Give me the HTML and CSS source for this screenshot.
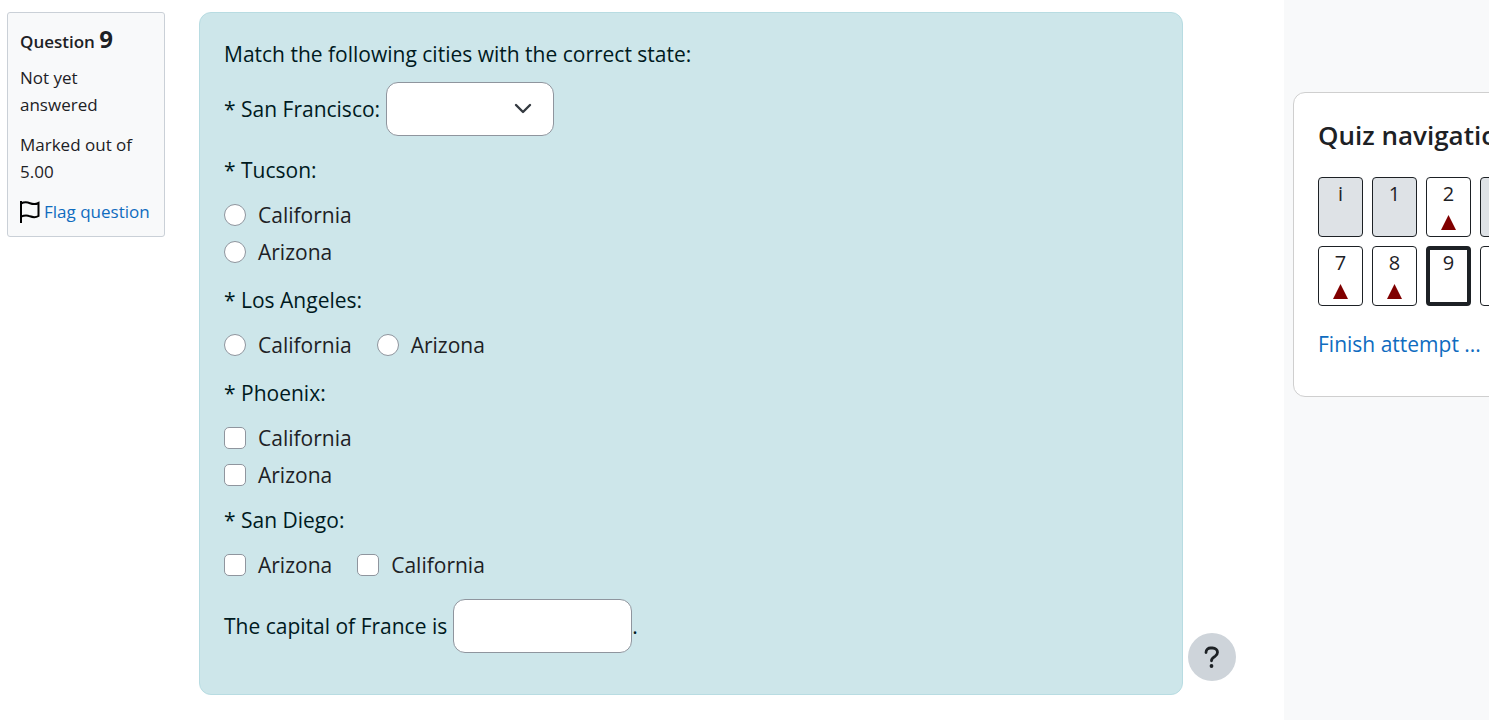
FILE: index.html
```html
<!DOCTYPE html>
<html lang="en">
<head>
  <meta charset="UTF-8" />
  <meta name="viewport" content="width=device-width, initial-scale=1.0" />
  <title>Quiz - Question 9</title>
  <link rel="stylesheet" href="styles.css">
</head>
<body>
  <div class="page">
    <main class="attempt">
      <section class="info">
        <h3 class="info-title">Question <span class="qno">9</span></h3>
        <div class="state">Not yet answered</div>
        <div class="grade">Marked out of 5.00</div>
        <a href="#" class="flag">
          <svg width="20" height="22" viewBox="0 0 20 22" fill="none" stroke="#000" stroke-width="2">
            <path d="M1 0V22" />
            <path d="M1 2.500C4 1 7 1 10 2.200C13 3.400 16 3.300 18.500 2V15C16 16.500 13 16.500 10 15.300C7 14 4 14.300 1 15.700" />
          </svg>
          <span>Flag question</span>
        </a>
      </section>

      <form class="question">
        <p class="text">Match the following cities with the correct state:</p>
        <div class="inline-answer">
          <label for="san-francisco">* San Francisco:</label>
          <div class="select-wrap">
            <select id="san-francisco" class="select">
              <option></option>
              <option>California</option>
              <option>Arizona</option>
            </select>
            <svg class="chevron" width="18" height="12" viewBox="0 0 18 12" fill="none" stroke="#343a40" stroke-width="2.4" stroke-linecap="round" stroke-linejoin="round">
              <path d="M2 2L9 9L16 2" />
            </svg>
          </div>
        </div>

        <fieldset class="group">
          <legend>* Tucson:</legend>
          <div class="options">
            <label><input type="radio" name="tucson" /> California</label>
            <label><input type="radio" name="tucson" /> Arizona</label>
          </div>
        </fieldset>

        <fieldset class="group">
          <legend>* Los Angeles:</legend>
          <div class="options horizontal">
            <label><input type="radio" name="los-angeles" /> California</label>
            <label><input type="radio" name="los-angeles" /> Arizona</label>
          </div>
        </fieldset>

        <fieldset class="group group-checks">
          <legend>* Phoenix:</legend>
          <div class="options">
            <label><input type="checkbox" name="phoenix" /> California</label>
            <label><input type="checkbox" name="phoenix" /> Arizona</label>
          </div>
        </fieldset>

        <fieldset class="group">
          <legend>* San Diego:</legend>
          <div class="options horizontal">
            <label><input type="checkbox" name="san-diego" /> Arizona</label>
            <label><input type="checkbox" name="san-diego" /> California</label>
          </div>
        </fieldset>

        <div class="inline-answer">
          <label for="capital">The capital of France is</label>
          <span class="blank"><input type="text" id="capital" class="input" />.</span>
        </div>
      </form>
    </main>

    <aside class="drawer">
      <section class="nav-card">
        <h2 class="nav-title">Quiz navigation</h2>
        <div class="nav-buttons">
          <a href="#" class="nav-btn info-page">i</a>
          <a href="#" class="nav-btn info-page">1</a>
          <a href="#" class="nav-btn invalid">2</a>
          <a href="#" class="nav-btn info-page" aria-label="Question 3"></a>
          <a href="#" class="nav-btn invalid">7</a>
          <a href="#" class="nav-btn invalid">8</a>
          <a href="#" class="nav-btn current">9</a>
          <a href="#" class="nav-btn" aria-label="Question 10"></a>
        </div>
        <a href="#" class="finish">Finish attempt ...</a>
      </section>
    </aside>
  </div>

  <button type="button" class="help" aria-label="Help">
    <svg width="16" height="24" viewBox="0 0 16 24" fill="none" stroke="#1d2125" stroke-width="2.8" stroke-linecap="round" stroke-linejoin="round">
      <path d="M2 7.500C2 4.500 4.500 3 6.500 3H8.500C11.500 3 13.500 5 13.500 7.300C13.500 9.300 12.500 10.400 11 11.400C9 12.600 7.500 13.200 7.500 15.800" />
      <circle cx="7.500" cy="21" r="1.900" fill="#1d2125" stroke="none" />
    </svg>
  </button>
</body>
</html>
```
FILE: styles.css
```css
* { box-sizing: border-box; }
body { margin: 0; font-family: "Segoe UI", "Open Sans", "Noto Sans", sans-serif; font-size: 21px; line-height: 34px; color: #1d2125; background: #fff; }
a { color: #0f6cbf; text-decoration: none; }
p, h2, h3 { margin: 0; }

.page { display: flex; min-height: 100vh; overflow: hidden; }
.attempt { flex: 1; display: flex; align-items: flex-start; gap: 34px; padding: 12px 101px 24px 7px; }

/* question info */
.info { width: 158px; padding: 11px 10px 11px 12px; border: 1px solid #cad0d7; border-radius: 3px; background: #f8f9fa; font-size: 17px; line-height: 27px; }
.info-title { margin-bottom: 7px; font-size: 17px; line-height: 30px; font-weight: 600; }
.qno { font-size: 24px; font-weight: 700; }
.state, .grade { margin-bottom: 13px; }
.flag { display: flex; align-items: center; gap: 4px; white-space: nowrap; }

/* question body */
.question { flex: 1; padding: 24px 24px 41px; border: 1px solid #b8dce2; border-radius: 12px; background: #cde6ea; color: #001a1e; }
.text { margin-bottom: 11px; }
.inline-answer { display: flex; align-items: center; gap: 6px; }
.select-wrap { position: relative; display: flex; }
.select { appearance: none; width: 168px; height: 54px; padding: 0 40px 0 16px; border: 1px solid #8f959e; border-radius: 12px; background: #fff; font: inherit; }
.chevron { position: absolute; top: 21px; right: 22px; pointer-events: none; }
.input { width: 179px; height: 54px; padding: 0 16px; border: 1px solid #8f959e; border-radius: 12px; background: #fff; font: inherit; }
.blank { display: flex; align-items: center; }

.group { margin: 0 0 14px; padding: 0; border: 0; }
.inline-answer + .group { margin-top: 17px; }
.group + .inline-answer { margin-top: 17px; }
.group-checks { margin-bottom: 11px; }
.group legend { margin-bottom: 11px; padding: 0; }
.options { display: flex; flex-direction: column; gap: 3px; color: #1d2125; }
.options.horizontal { flex-direction: row; gap: 25px; }
.options label { display: flex; align-items: center; gap: 12px; }
.options input { appearance: none; flex: none; width: 22px; height: 22px; margin: 0; border: 1px solid #8f959e; background: #fff; }
.options input[type="radio"] { border-radius: 50%; }
.options input[type="checkbox"] { border-radius: 5px; }
.options input:checked { background: #0f6cbf; }

/* drawer */
.drawer { flex: none; width: 205px; padding: 92px 0 0 9px; background: #f8f9fa; }
.nav-card { width: 380px; padding: 24px 24px 35px; border: 1px solid #cfcfcf; border-radius: 12px; background: #fff; }
.nav-title { margin-bottom: 24px; font-size: 26px; line-height: 36px; font-weight: 600; }
.nav-buttons { display: grid; grid-template-columns: repeat(4, 45px); gap: 9px; margin-bottom: 21px; }
.nav-btn { display: flex; flex-direction: column; align-items: center; height: 60px; border: 1px solid #1d2125; border-radius: 4px; background: #fff; color: #1d2125; font-size: 20px; line-height: 32px; }
.info-page { background: #dee2e6; }
.invalid::after { content: ""; width: 15px; height: 15px; margin-top: 5px; background: #800000; clip-path: polygon(50% 0, 100% 100%, 0 100%); }
.current { border-width: 4px; line-height: 26px; }
.finish { display: block; }

.help { position: fixed; right: 253px; bottom: 39px; display: flex; align-items: center; justify-content: center; width: 48px; height: 48px; padding: 0; border: 0; border-radius: 50%; background: #ced4da; cursor: pointer; }
```
